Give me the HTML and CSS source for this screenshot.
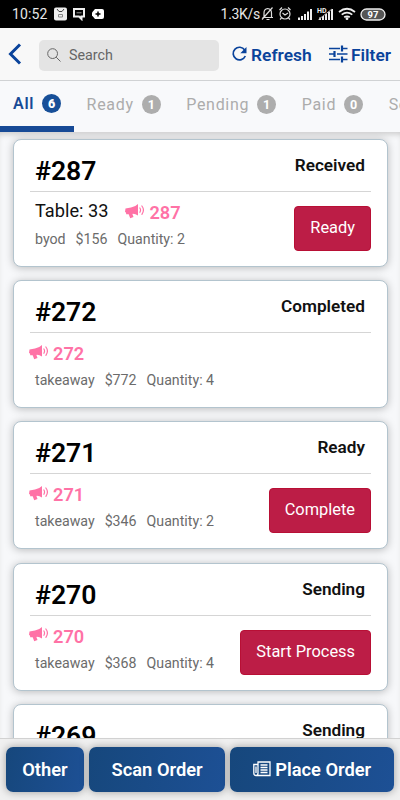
FILE: index.html
```
<!DOCTYPE html>
<html lang="en">

<head>
    <title>Orders</title>
    <meta charset="utf-8" />
    <meta name="viewport" content="width=device-width, initial-scale=1">
    <link rel="stylesheet" href="styles.css">
</head>

<body>
    <svg class="sprite">
        <symbol id="horn" viewBox="0 0 20 16">
            <path fill="currentColor" d="M0.500 5.500L6 4.500Q10 4 13 1V12.500Q10.500 11 8 10.800L7.400 11 8.500 14 5.200 15.300 3.700 11.200 1.200 11.300 1 9.500 0 9z" />
            <path fill="none" stroke="currentColor" stroke-width="1.200" stroke-linecap="round" d="M14.900 5Q16.200 7 14.900 9.300M16.900 3Q20 7 16.900 11.300" />
        </symbol>
    </svg>

    <div class="status">
        <span class="clock">10:52</span>
        <svg class="notes" width="50" height="14" viewBox="0 0 50 14">
            <rect x="0" y="0.5" width="13" height="13" rx="2" fill="#eee" />
            <path d="M3 2L5 4.500H8L10 2" fill="none" stroke="#444" />
            <path d="M4.500 7.500h4v2.500h-4z" fill="none" stroke="#888" />
            <path d="M20 2h10v7.500h-2.500v2.500l-2.500-2.500h-5z" fill="none" stroke="#eee" stroke-width="2" />
            <path d="M22.500 5.800h5" stroke="#999" />
            <path d="M41 2h7q2 0 2 2v6q0 2-2 2h-7l-3-3.500V5.500z" fill="#fff" />
            <path d="M44 4.500v5M41.500 7h5" stroke="#000" stroke-width="1.500" />
        </svg>
        <span class="speed">1.3K/s</span>
        <svg class="signals" width="125" height="16" viewBox="0 0 125 16">
            <g fill="none" stroke="#ddd" stroke-width="1.200">
                <path d="M1.500 11.500h10.500M3 11V7q0-4 3.700-4.500Q10.500 3 10.500 7v4M5.500 13.500h3M1 13.500L11.500 1.500" />
                <circle cx="24" cy="8" r="5" />
                <path d="M21.500 7L24 9l3-2M18.500 4l2.500-2.500M27 1.500L29.500 4M20.500 12l-1.500 1.500M27.500 12l1.500 1.500" />
            </g>
            <g fill="#eee">
                <path d="M37 11.500h2V14h-2zM40 10h2v4h-2zM43 8h2v6h-2zM46 5.500h2V14h-2zM49 3h2v11h-2z" />
                <path d="M58 11.500h2V14h-2zM61 10h2v4h-2zM64 8h2v6h-2zM67 5.500h2V14h-2zM70 3h2v11h-2z" />
                <path d="M57.500 13.500L71 3" stroke="#aaa" />
                <text class="hd" x="56" y="6.500">HD</text>
            </g>
            <g fill="none" stroke="#eee" stroke-width="1.700">
                <path d="M78 6Q86 -.5 94 6M80.700 8.700Q86 4.500 91.300 8.700M83.200 11.300Q86 9.300 88.800 11.300" />
                <rect x="100" y="3" width="24" height="11" rx="5.500" fill="#555" stroke-width="1.300" />
            </g>
            <circle cx="86" cy="12.700" r="1.400" fill="#eee" />
            <text class="battery" x="112" y="11.800" text-anchor="middle">97</text>
        </svg>
    </div>

    <div class="header">
        <svg class="back" width="14" height="22" viewBox="0 0 14 22">
            <path d="M12 1.500L2.500 11 12 20.500" fill="none" stroke="#0a439b" stroke-width="3" />
        </svg>
        <div class="search">
            <svg width="14" height="14" viewBox="0 0 14 14" fill="none" stroke="#666">
                <circle cx="5.600" cy="5.600" r="4.900" />
                <path d="M9.200 9.200L13.500 13.500" />
            </svg>
            <span>Search</span>
        </div>
        <a class="action refresh">
            <svg width="16" height="16" viewBox="0 0 16 16">
                <path d="M12.700 4A6.300 6.300 0 1 0 13.300 10" fill="none" stroke="#0a439b" stroke-width="1.700" />
                <path d="M14.500 1v6.300H8.300z" fill="#0a439b" />
            </svg>
            <span>Refresh</span>
        </a>
        <a class="action filter">
            <svg width="19" height="18" viewBox="0 0 19 18" fill="none" stroke="#0a439b">
                <path stroke-width="1.500" d="M0 3.500h11M13 3.500h5.500M0 9h5M8 9h10.500M0 14.500h11M13 14.500h5.500" />
                <path stroke-width="2.200" d="M13 .5v6M5.500 6v6M13 11.500v6" />
            </svg>
            <span>Filter</span>
        </a>
    </div>

    <div class="tabs">
        <div class="tab active">All <b>6</b></div>
        <div class="tab">Ready <b>1</b></div>
        <div class="tab">Pending <b>1</b></div>
        <div class="tab">Paid <b>0</b></div>
        <div class="tab">Se</div>
    </div>

    <div class="orders">
        <div class="card">
            <div class="top"><h2>#287</h2><span class="state">Received</span></div>
            <div class="info">
                <div class="call"><span class="table">Table: 33</span><svg class="horn"><use href="#horn" /></svg><b>287</b></div>
                <div class="detail"><span>byod</span><span>$156</span><span>Quantity: 2</span></div>
                <button>Ready</button>
            </div>
        </div>
        <div class="card">
            <div class="top"><h2>#272</h2><span class="state">Completed</span></div>
            <div class="info">
                <div class="call"><svg class="horn"><use href="#horn" /></svg><b>272</b></div>
                <div class="detail"><span>takeaway</span><span>$772</span><span>Quantity: 4</span></div>
            </div>
        </div>
        <div class="card">
            <div class="top"><h2>#271</h2><span class="state">Ready</span></div>
            <div class="info">
                <div class="call"><svg class="horn"><use href="#horn" /></svg><b>271</b></div>
                <div class="detail"><span>takeaway</span><span>$346</span><span>Quantity: 2</span></div>
                <button>Complete</button>
            </div>
        </div>
        <div class="card">
            <div class="top"><h2>#270</h2><span class="state">Sending</span></div>
            <div class="info">
                <div class="call"><svg class="horn"><use href="#horn" /></svg><b>270</b></div>
                <div class="detail"><span>takeaway</span><span>$368</span><span>Quantity: 4</span></div>
                <button>Start Process</button>
            </div>
        </div>
        <div class="card">
            <div class="top"><h2>#269</h2><span class="state">Sending</span></div>
            <div class="info"></div>
        </div>
    </div>

    <div class="footer">
        <button class="other">Other</button>
        <button class="scan">Scan Order</button>
        <button class="place">
            <svg width="18" height="16" viewBox="0 0 18 16" fill="none" stroke="#fff" stroke-width="1.300">
                <path d="M5 1h12v13.500H3Q.8 14.500.8 12V3.500H5zM5 1v11q0 2.500-2 2.500M3 5.500V12" />
                <path d="M7.500 4h7M7.500 6.500h7M7.500 9h7M7.500 11.500h7" />
            </svg>
            <span>Place Order</span>
        </button>
    </div>
</body>

</html>
```

FILE: styles.css
```
* {
    box-sizing: border-box;
}

body {
    margin: 0;
    height: 800px;
    display: flex;
    flex-direction: column;
    overflow: hidden;
    font-family: Roboto, "Liberation Sans", sans-serif;
    background: #f7f8fa;
}

svg {
    display: block;
    flex: none;
}

.sprite {
    position: absolute;
    width: 0;
    height: 0;
}

.status {
    flex: none;
    height: 28px;
    display: flex;
    align-items: center;
    padding: 0 14px 0 12px;
    background: #000;
    color: #e6e6e6;
    font-size: 14px;
}

.clock {
    letter-spacing: 0.15px;
}

.notes {
    margin-left: 6px;
}

.speed {
    margin-left: auto;
    margin-right: 1px;
    letter-spacing: -0.3px;
}

.hd {
    font-size: 7px;
    font-weight: 700;
}

.battery {
    font-size: 9.5px;
    font-weight: 700;
    fill: #fff;
}

.header {
    flex: none;
    height: 52px;
    display: flex;
    align-items: center;
    padding: 0 9px 0 8px;
    background: #f8f8f8;
}

.search {
    display: flex;
    align-items: center;
    width: 180px;
    height: 31px;
    margin: 2px 13px 0 17px;
    padding-left: 8px;
    gap: 8px;
    border-radius: 5px;
    background: #e4e4e4;
    color: #666;
    font-size: 14.3px;
}

.action {
    display: flex;
    align-items: center;
    gap: 3px;
    color: #0a439b;
    font-size: 17.4px;
    font-weight: 600;
    white-space: nowrap;
}

.action span {
    padding-top: 1px;
}

.filter {
    margin-left: auto;
}

.tabs {
    flex: none;
    height: 52px;
    display: flex;
    overflow: hidden;
    border-top: 1px solid #d0d2d4;
    background: #f8f9fb;
}

.tab {
    flex: none;
    display: flex;
    align-items: center;
    gap: 8px;
    padding: 0 13px 5px 12.5px;
    color: #acacac;
    font-size: 16px;
    letter-spacing: 0.7px;
}

.tab b {
    width: 19px;
    height: 19px;
    border-radius: 50%;
    background: #adadad;
    color: #fff;
    font-size: 12.5px;
    line-height: 19px;
    letter-spacing: 0;
    text-align: center;
}

.tab.active {
    padding-left: 13px;
    padding-bottom: 0;
    border-bottom: 6px solid #174a96;
    color: #174a96;
    font-weight: 600;
}

.tab.active b {
    background: #174f98;
}

.orders {
    flex: 1;
    min-height: 0;
    display: flex;
    flex-direction: column;
    gap: 13.2px;
    padding: 7px 12px 0 13px;
    overflow: hidden;
    box-shadow: inset 0 5px 6px -3px #c8c8c8;
}

.card {
    flex: none;
    height: 128px;
    padding: 0 16px;
    border: 1px solid #b3c4ce;
    border-radius: 8px;
    background: #fff;
    box-shadow: 0 1px 9px rgba(0, 0, 0, 0.25);
}

.top {
    display: flex;
    justify-content: space-between;
    height: 52px;
    padding: 0 5px;
    border-bottom: 1px solid #d5d5d5;
}

.top h2 {
    margin: 15px 0 0;
    font-size: 26.6px;
    font-weight: 600;
    line-height: 32px;
}

.state {
    margin: 14px 1px 0 0;
    color: #111;
    font-size: 17.2px;
    font-weight: 600;
    line-height: 22px;
}

.info {
    position: relative;
}

.call {
    display: flex;
    height: 37px;
    align-items: center;
    margin-left: -1px;
    color: #ff72a6;
    font-size: 18.2px;
}

.call b {
    margin-left: 4px;
    padding-top: 4px;
    font-weight: 600;
}

.table {
    margin: 0 17px 0 6px;
    color: #111;
}

.horn {
    width: 20px;
    height: 16px;
}

.detail {
    display: flex;
    gap: 10px;
    margin-top: 1px;
    padding-left: 5px;
    color: #6b6b6b;
    font-size: 14.2px;
    line-height: 18px;
}

button {
    border: 0;
    color: #fff;
    font-family: inherit;
}

.info button {
    position: absolute;
    top: 14px;
    right: 0;
    height: 45px;
    padding: 0 15px 2px;
    border: 1px solid #b80f35;
    border-radius: 4px;
    background: #bc1d46;
    font-size: 16.4px;
}

.footer {
    flex: none;
    height: 62px;
    display: flex;
    gap: 5px;
    padding: 8px 6px;
    border-top: 1px solid #d2d2d2;
    background: #f0f0f0;
}

.footer button {
    display: flex;
    align-items: center;
    justify-content: center;
    height: 45px;
    padding: 0 0 1px;
    border-radius: 7px;
    background: linear-gradient(100deg, #16477c, #1d5095);
    box-shadow: 0 0 8px rgba(0, 0, 0, 0.35);
    font-size: 18.3px;
    font-weight: 600;
    gap: 4px;
}

.other {
    width: 78px;
}

.scan {
    width: 137px;
}

.place {
    width: 164px;
}
```
